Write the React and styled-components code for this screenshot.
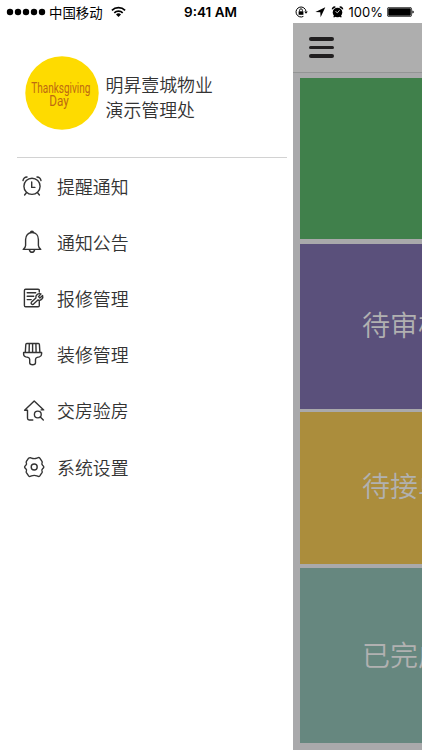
import styled, { createGlobalStyle } from 'styled-components'

const menuItems = [
  { label: '提醒通知', icon: AlarmIcon },
  { label: '通知公告', icon: BellIcon },
  { label: '报修管理', icon: RepairIcon },
  { label: '装修管理', icon: BrushIcon },
  { label: '交房验房', icon: HouseIcon },
  { label: '系统设置', icon: GearIcon },
]

const cards = [
  { label: '', color: '#40804b', height: 160.5, gap: 5 },
  { label: '待审核', color: '#5a507b', height: 165, gap: 3.5 },
  { label: '待接单', color: '#ab8d3c', height: 151.5, gap: 4 },
  { label: '已完成', color: '#66877f', height: 175, gap: 0, shift: 3 },
]

export default function App() {
  return (
    <Screen>
      <GlobalStyle />
      <StatusBar />
      <Body>
        <Drawer>
          <Profile>
            <Avatar />
            <Company>
              明昇壹城物业
              <br />
              演示管理处
            </Company>
          </Profile>
          <Menu>
            {menuItems.map(({ label, icon: Icon }) => (
              <MenuItem key={label}>
                <Icon />
                <span>{label}</span>
              </MenuItem>
            ))}
          </Menu>
        </Drawer>
        <Page>
          <Header>
            <MenuButton aria-label="menu">
              <Bar />
              <Bar />
              <Bar />
            </MenuButton>
          </Header>
          <CardList>
            {cards.map((card) => (
              <Card key={card.color} $color={card.color} $height={card.height} $gap={card.gap} $shift={card.shift}>
                {card.label}
              </Card>
            ))}
          </CardList>
        </Page>
      </Body>
    </Screen>
  )
}

function StatusBar() {
  return (
    <StatusRow>
      <Side>
        <svg width="40" height="8" viewBox="0 0 40 8">
          {[4, 12, 20, 28, 36].map((x) => (
            <circle key={x} cx={x} cy="4" r="3.2" />
          ))}
        </svg>
        <Carrier>中国移动</Carrier>
        <svg width="15" height="12" viewBox="0 0 15 12">
          <g fill="none" stroke="#000" strokeWidth="1.7">
            <path d="M.9 4.3a9.4 9.4 0 0 1 13.2 0" />
            <path d="M3.3 6.8a6 6 0 0 1 8.4 0" />
          </g>
          <path d="M7.5 11 5 8.5a3.6 3.6 0 0 1 5 0z" />
        </svg>
      </Side>
      <Clock>9:41 AM</Clock>
      <Side $end>
        <svg width="50" height="14" viewBox="0 0 50 14">
          <g fill="none" stroke="#000">
            <path d="M8.4 11.4A5 5 0 1 1 11 6.4" />
            <path d="M4.6 6.5V5.2a1.4 1.4 0 0 1 2.8 0v1.3" strokeWidth=".9" />
          </g>
          <path d="M3.6 6.3h4.8v3.5H3.6z" />
          <path d="M9.2 6.4h3.6l-1.8 2.4z" />
          <path d="M30.3 2.2 25.6 12.300l-.3-5-4.900-.3z" />
          <circle cx="42.500" cy="7.500" r="4.800" />
          <path d="M36.900 4.800a2.600 2.600 0 0 1 4-2.900zM48.100 4.800a2.600 2.600 0 0 0-4-2.900zM39.500 10l-1.300 2 1 .6 1.700-1.700zM45.500 10l1.300 2-1 .6-1.700-1.700z" />
          <path d="M44.600 5.200 42.500 7.700l-2-1.200" fill="none" stroke="#fff" strokeWidth=".8" />
        </svg>
        <Percent>100%</Percent>
        <svg width="27" height="10" viewBox="0 0 27 10">
          <rect x=".4" y=".4" width="24.2" height="9.2" rx="1.6" fill="none" stroke="#000" strokeWidth=".7" />
          <rect x="1.2" y="1.2" width="22.6" height="7.6" rx=".7" />
          <path d="M25.4 3.4q1.4.3 1.4 1.6t-1.4 1.6z" />
        </svg>
      </Side>
    </StatusRow>
  )
}

function Avatar() {
  return (
    <svg width="74" height="74" viewBox="0 0 74 74">
      <circle cx="37" cy="37" r="36.7" fill="#fedb00" />
      <g fill="#bd6a12" fontFamily="Roboto, sans-serif" fontSize="13.8">
        <text x="6.3" y="37" textLength="59" lengthAdjust="spacingAndGlyphs">
          Thanksgiving
        </text>
        <text x="24.3" y="50" textLength="19.5" lengthAdjust="spacingAndGlyphs">
          Day
        </text>
      </g>
    </svg>
  )
}

function AlarmIcon() {
  return (
    <Icon viewBox="0 0 24 24">
      <circle cx="10" cy="12.3" r="8.1" />
      <path d="M9.7 8V13.4h3.2M1 6.6A4.4 4.4 0 0 1 5 3M19 6.6A4.4 4.4 0 0 0 15 3M4.4 18.7 2.6 21M15.6 18.7l1.8 2.3" />
    </Icon>
  )
}

function BellIcon() {
  return (
    <Icon viewBox="0 0 24 24">
      <path d="M3.6 15.4V9.6C3.6 5.2 6.3 2.5 10 2.5s6.4 2.7 6.4 7.1v5.8q0 1.8 2.4 4H1.2q2.4-2.2 2.4-4zM8.6 2.6q0-1.3 1.4-1.3t1.4 1.3M7.3 19.5q.6 2.8 2.7 2.8t2.7-2.8" />
    </Icon>
  )
}

function RepairIcon() {
  return (
    <Icon viewBox="0 0 24 24">
      <path d="M17.3 6V4.4a1.2 1.2 0 0 0-1.2-1.2H3.6a1.2 1.2 0 0 0-1.2 1.2v15.2a1.2 1.2 0 0 0 1.2 1.2h12.5a1.2 1.2 0 0 0 1.2-1.2v-4.1M5.2 6.8h8.5M5.2 10.2h6.5M5.2 13.6h4" />
      <path d="m18.9 8-2.4 2.6 1.4 1.4 2.7-2.4a3.5 3.5 0 0 1-4.7 4.4L11.6 18a1.4 1.4 0 0 1-2.1-1.9l4.4-4.1A3.6 3.6 0 0 1 18.9 8z" />
    </Icon>
  )
}

function BrushIcon() {
  return (
    <Icon viewBox="0 0 24 24">
      <path d="M3.3 10.4 3.8 2.500q.1-1 1-1h11.600q.9 0 1 1l.5 7.900M7.300 1.700 7.100 10.200M10.600 1.700v8.500M13.900 1.700l.2 8.500M1.600 10.500h18v1.500q0 2.300-2.200 2.900l-2.200.5q-1.700.5-1.700 2.200v3.200q0 2-2.900 2t-2.900-2v-3.200q0-1.700-1.700-2.200l-2.200-.5Q1.600 14.300 1.600 12z" />
    </Icon>
  )
}

function HouseIcon() {
  return (
    <Icon viewBox="0 0 24 24">
      <path d="M10.800 22H7.200q-1.700 0-1.700-1.700v-8H2.600l9.600-9.300 9.500 8.900h-2.600" />
      <circle cx="15.8" cy="16.5" r="3.4" />
      <path d="m18.3 19 3 2.9" />
    </Icon>
  )
}

function GearIcon() {
  return (
    <Icon viewBox="0 0 24 24">
      <circle cx="12.2" cy="12" r="3" />
      <path d="M8.2 2.6q-1 0-1.6.6L4.4 6.4q-.5.8 0 1.6.5 1-.6 2.2-1.2 1-1.2 1.8t1.2 1.8q1.1 1.2.6 2.2-.5.8 0 1.6l2.2 3.2q.6.8 1.6.6l1.3-.5q2.7-1 5.4 0l1.3.5q1 .2 1.6-.6l2.2-3.2q.5-.8 0-1.6-.5-1 .6-2.2 1.2-1 1.2-1.8t-1.2-1.8q-1.1-1.2-.6-2.2.5-.8 0-1.6l-2.2-3.2q-.6-.8-1.6-.6l-1.3.5q-2.7 1-5.4 0z" />
    </Icon>
  )
}

const GlobalStyle = createGlobalStyle`
  * {
    box-sizing: border-box;
  }
  body {
    margin: 0;
    background: #fff;
    font-family: 'Noto Sans CJK SC', sans-serif;
  }
  svg {
    display: block;
    flex: none;
  }
`

const Screen = styled.div`
  width: 422px;
  height: 750px;
  display: flex;
  flex-direction: column;
  overflow: hidden;
  background: #fff;
`

const StatusRow = styled.div`
  height: 23px;
  flex: none;
  display: grid;
  grid-template-columns: 1fr auto 1fr;
  align-items: center;
  padding: 0 8px 0 6px;
  color: #000;
`

const Side = styled.div`
  display: flex;
  align-items: center;
  justify-content: ${({ $end }) => ($end ? 'flex-end' : 'flex-start')};
  gap: ${({ $end }) => ($end ? '4px' : '0')};
`

const Carrier = styled.span`
  margin: 0 8px 0 3px;
  font-size: 13.4px;
  line-height: 23px;
  white-space: nowrap;
`

const Clock = styled.span`
  padding-left: 1px;
  font-family: Inter, sans-serif;
  font-weight: 600;
  font-size: 13.5px;
  line-height: 23px;
`

const Percent = styled.span`
  font-family: Inter, sans-serif;
  font-size: 13px;
  line-height: 24px;
`

const Body = styled.div`
  flex: 1;
  display: flex;
  min-height: 0;
`

const Drawer = styled.div`
  width: 293px;
  flex: none;
  background: #fff;
`

const Profile = styled.div`
  display: flex;
  align-items: flex-start;
  height: 135px;
  margin: 0 6px 0 17px;
  padding: 33px 0 0 8px;
  border-bottom: 1px solid #d2d2d2;
`

const Company = styled.div`
  margin: 16px 0 0 6.5px;
  font-size: 17.9px;
  line-height: 24.5px;
  font-weight: 350;
  color: #333;
`

const Menu = styled.ul`
  margin: 0;
  padding: 0 0 0 22px;
  list-style: none;
`

const MenuItem = styled.li`
  display: flex;
  align-items: center;
  gap: 11px;
  height: 56.1px;
  font-size: 17.9px;
  font-weight: 350;
  color: #333;
`

const Icon = styled.svg`
  width: 24px;
  height: 24px;
  fill: none;
  stroke: #333;
  stroke-width: 1.4;
  stroke-linecap: round;
  stroke-linejoin: round;
`

const Page = styled.div`
  flex: 1;
  min-width: 0;
  overflow: hidden;
  background: #a9a9ab;
`

const Header = styled.div`
  height: 50px;
  padding: 14px 0 0 16px;
  background: #aeaeae;
  border-bottom: 1px solid #939595;
`

const MenuButton = styled.button`
  display: flex;
  flex-direction: column;
  gap: 5px;
  padding: 0;
  border: 0;
  background: none;
`

const Bar = styled.span`
  width: 25px;
  height: 3.7px;
  border-radius: 2px;
  background: #211f20;
`

const CardList = styled.div`
  padding: 5px 0 0 7px;
`

const Card = styled.div`
  height: ${({ $height }) => $height}px;
  margin-bottom: ${({ $gap }) => $gap}px;
  padding: ${({ $shift }) => $shift || 0}px 0 5px 62px;
  display: flex;
  align-items: center;
  background: ${({ $color }) => $color};
  color: #b1b1b1;
  font-size: 28px;
  font-weight: 350;
  white-space: nowrap;
`
